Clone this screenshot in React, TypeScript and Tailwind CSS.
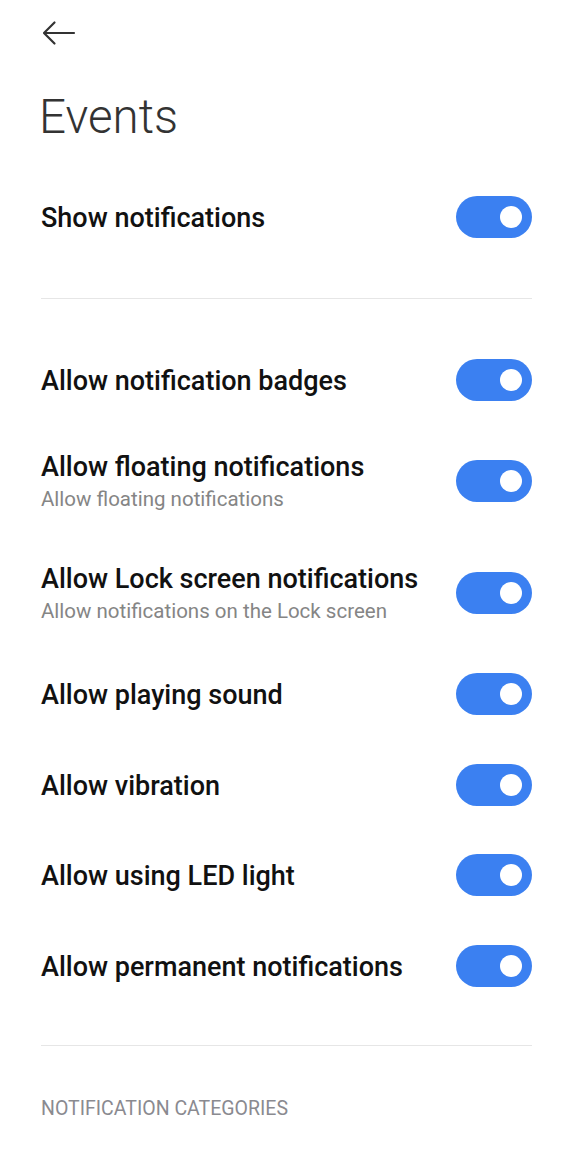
import React from 'react';

type Item = { title: string; subtitle?: string };

const items: Item[] = [
  { title: 'Allow notification badges' },
  { title: 'Allow floating notifications', subtitle: 'Allow floating notifications' },
  { title: 'Allow Lock screen notifications', subtitle: 'Allow notifications on the Lock screen' },
  { title: 'Allow playing sound' },
  { title: 'Allow vibration' },
  { title: 'Allow using LED light' },
  { title: 'Allow permanent notifications' },
];

function Toggle() {
  return (
    <div className="flex h-[42px] w-[76px] shrink-0 items-center justify-end rounded-full bg-[#3b80f1] pr-[10px]">
      <div className="h-[22px] w-[22px] rounded-full bg-white" />
    </div>
  );
}

function Row({ title, subtitle }: Item) {
  return (
    <div className={`flex items-center justify-between ${subtitle ? 'h-[112px]' : 'h-[90.5px]'}`}>
      <div className="flex flex-col pt-[2px]">
        <span className="text-[27px] leading-[34px] font-medium text-[#111]">{title}</span>
        {subtitle && <span className="text-[20.5px] leading-[30px] text-[#858585]">{subtitle}</span>}
      </div>
      <Toggle />
    </div>
  );
}

export default function App() {
  return (
    <main className="min-h-screen bg-white pl-[41px] pr-[43px]" style={{ fontFamily: 'Roboto, "Noto Sans", sans-serif' }}>
      {/* Back arrow */}
      <div className="pt-[20px]">
        <svg className="ml-[1px] h-[26px] w-[34px]" viewBox="0 0 34 26" fill="none" stroke="#333" strokeWidth={2.2} strokeLinecap="round" strokeLinejoin="round">
          <path d="M32 13H2.5M12.5 2.5L2 13l10.5 10.5" />
        </svg>
      </div>

      {/* Title */}
      <h1 className="-ml-[2px] mt-[43px] text-[47.5px] leading-[56px] font-light text-[#333]">Events</h1>

      {/* Master toggle */}
      <div className="mt-[27px]">
        <Row title="Show notifications" />
      </div>

      <div className="mt-[35px] mb-[36px] h-px bg-[#e6e6e6]" />

      <div className="flex flex-col">
        {items.map((item) => (
          <Row key={item.title} {...item} />
        ))}
      </div>

      <div className="mt-[34px] h-px bg-[#e6e6e6]" />

      <div className="pt-[50px] text-[19.5px] leading-[26px] uppercase text-[#8a8a90]">Notification categories</div>
    </main>
  );
}
